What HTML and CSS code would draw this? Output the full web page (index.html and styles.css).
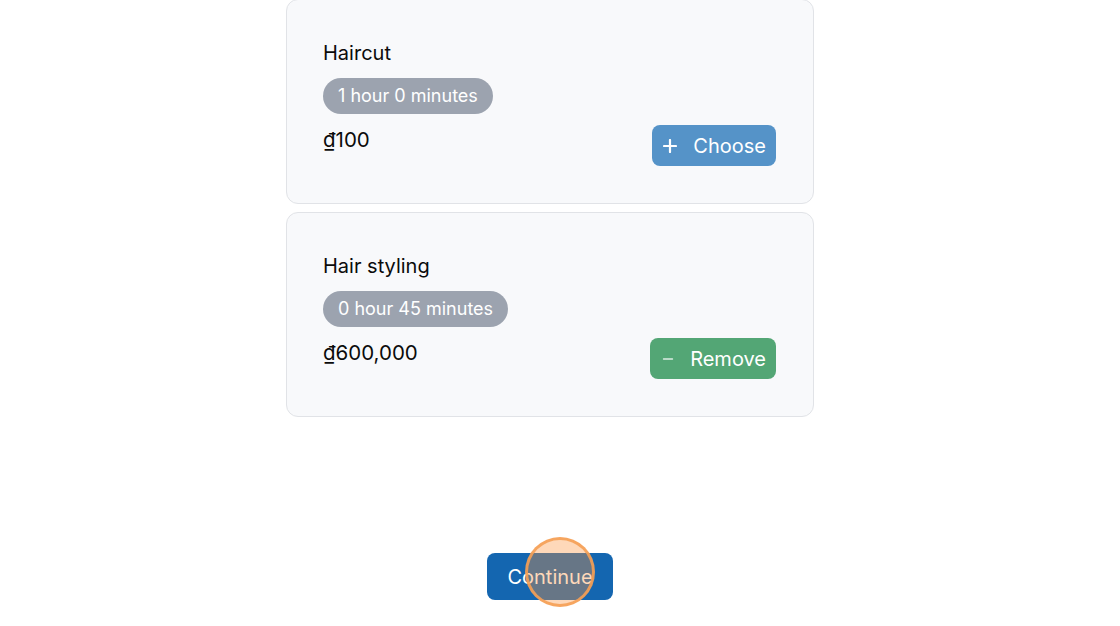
FILE: index.html
```html
<!DOCTYPE html>
<html lang="en">
<head>
<meta charset="utf-8">
<title>Services</title>
<link rel="stylesheet" href="styles.css">
</head>
<body>
<main class="page">
  <section class="list">
    <article class="card">
      <h3 class="title">Haircut</h3>
      <span class="badge">1 hour 0 minutes</span>
      <div class="row">
        <span class="price">₫100</span>
        <button class="btn btn-choose">
          <svg class="ico" width="14" height="14" viewBox="0 0 14 14"><path d="M7 1v12M1 7h12" stroke="#fff" stroke-width="2.2" stroke-linecap="round" fill="none"/></svg>
          <span>Choose</span>
        </button>
      </div>
    </article>
    <article class="card">
      <h3 class="title">Hair styling</h3>
      <span class="badge">0 hour 45 minutes</span>
      <div class="row">
        <span class="price">₫600,000</span>
        <button class="btn btn-remove">
          <svg class="ico" width="12" height="14" viewBox="0 0 12 14"><path d="M1.5 7h9" stroke="rgba(255,255,255,0.8)" stroke-width="1.4" stroke-linecap="round" fill="none"/></svg>
          <span>Remove</span>
        </button>
      </div>
    </article>
  </section>
  <div class="footer">
    <button class="continue">Continue<span class="tap"></span></button>
  </div>
</main>
</body>
</html>
```
FILE: styles.css
```css
* { box-sizing: border-box; }
html, body { margin: 0; padding: 0; background: #ffffff; }
body {
  font-family: Inter, "Noto Sans", "Liberation Sans", sans-serif;
  color: #111111;
  height: 626px;
  overflow: hidden;
  padding-right: 20px;
}
.page {
  width: 528px;
  margin: 0 auto;
  display: flex;
  flex-direction: column;
}
.list {
  margin-top: -1px;
  display: flex;
  flex-direction: column;
  gap: 8px;
}
.card {
  background: #f8f9fb;
  border: 1px solid #e1e3e7;
  border-radius: 12px;
  padding: 39px 37px 35px 36px;
  display: flex;
  flex-direction: column;
  align-items: flex-start;
  height: 205px;
}
.title {
  margin: 0;
  font-size: 20px;
  font-weight: 400;
  line-height: 28px;
  color: #0b0b0b;
}
.badge {
  margin-top: 11px;
  height: 36px;
  line-height: 36px;
  padding: 0 15px;
  border-radius: 18px;
  background: #9ca3af;
  color: #ffffff;
  font-size: 18px;
}
.row {
  margin-top: 11px;
  align-self: stretch;
  display: flex;
  justify-content: space-between;
  align-items: flex-start;
}
.price {
  margin-top: 1px;
  font-size: 20.5px;
  line-height: 28px;
  color: #0b0b0b;
}
.btn {
  height: 41px;
  border: none;
  border-radius: 8px;
  color: #ffffff;
  font-family: inherit;
  font-size: 20px;
  display: flex;
  align-items: center;
  gap: 16px;
  padding: 0 10px 0 11px;
  cursor: pointer;
}
.btn-choose { background: #5593c8; }
.btn-remove { background: #53a675; gap: 16px; padding-left: 12px; }
.ico { display: block; }
.footer {
  margin-top: 136px;
  display: flex;
  justify-content: center;
}
.continue {
  position: relative;
  height: 47px;
  width: 126px;
  border: none;
  border-radius: 8px;
  background: #1466b0;
  color: #ffffff;
  font-family: inherit;
  font-size: 20px;
  padding: 0;
}
.tap {
  position: absolute;
  left: 38px;
  top: -16px;
  width: 70px;
  height: 70px;
  border-radius: 50%;
  background: rgba(251, 146, 60, 0.36);
  border: 3px solid rgba(245, 160, 85, 0.9);
}
```
